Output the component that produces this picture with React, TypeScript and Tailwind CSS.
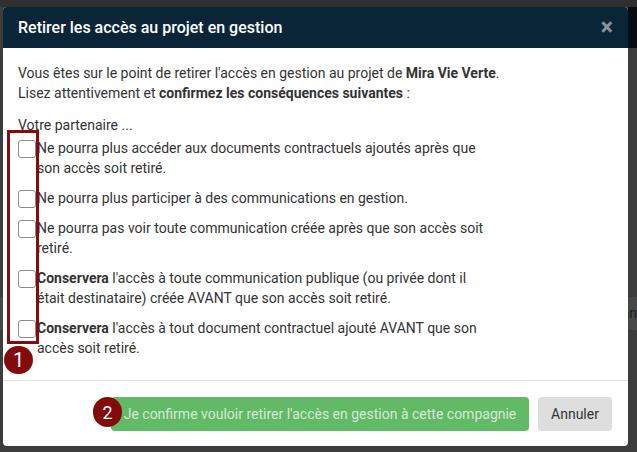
import React from "react";

const items: React.ReactNode[] = [
  <>Ne pourra plus accéder aux documents contractuels ajoutés après que son accès soit retiré.</>,
  <>Ne pourra plus participer à des communications en gestion.</>,
  <>Ne pourra pas voir toute communication créée après que son accès soit retiré.</>,
  <>
    <span className="font-bold">Conservera</span> l'accès à toute communication publique (ou privée dont il était destinataire) créée AVANT que son accès soit retiré.
  </>,
  <>
    <span className="font-bold">Conservera</span> l'accès à tout document contractuel ajouté AVANT que son accès soit retiré.
  </>,
];

export default function App() {
  return (
    <div className="relative w-[637px] h-[452px] overflow-hidden bg-[#3c3c3c] font-['Roboto','Liberation_Sans',sans-serif]">
      {/* backdrop page */}
      <div className="flex flex-col">
        <div className="h-[7px] bg-[#2f2f2f]" />
        <div className="h-[41px] flex justify-end">
          <div className="w-[9px] bg-[#060d12]" />
        </div>
        <div className="h-[249px]" />
        <div className="h-[33px] bg-[#474747] flex justify-end items-center text-[14px] text-[#1c1c1c]">
          <span>nn</span>
        </div>
      </div>

      {/* modal */}
      <div className="absolute left-[3px] top-[7px] w-[625px] bg-white rounded-[4px] overflow-hidden">
        <div className="h-[41px] bg-[#0b2538] flex items-center justify-between pl-[15px] pr-[15px]">
          <span className="text-white text-[16px] font-medium">Retirer les accès au projet en gestion</span>
          <span className="text-[#8796a1] text-[23px] font-bold leading-none">×</span>
        </div>

        <div className="px-[15px] pt-[15px] pb-[22px] text-[14px] leading-[20px] text-[#333]">
          <p>
            Vous êtes sur le point de retirer l'accès en gestion au projet de <span className="font-bold">Mira Vie Verte</span>.
          </p>
          <p>
            Lisez attentivement et <span className="font-bold">confirmez les conséquences suivantes</span> :
          </p>
          <p className="mt-[12px]">Votre partenaire ...</p>
          <div className="mt-[3px] flex flex-col gap-[10px]">
            {items.map((t, i) => (
              <div key={i} className="flex items-start">
                <div className="mt-[2px] w-[18px] h-[18px] shrink-0 rounded-[3px] border border-[#8c8c8c] bg-white" />
                <div className="ml-[1px] w-[460px]">{t}</div>
              </div>
            ))}
          </div>
        </div>

        <div className="border-t border-[#e5e5e5] pt-[16px] pb-[15px] pr-[16px] flex justify-end gap-[9px]">
          <div className="relative">
            <button className="h-[34px] w-[418px] rounded-[4px] bg-[#62b966] text-[#d6ead6] text-[14px] px-[12px]">
              Je confirme vouloir retirer l'accès en gestion à cette compagnie
            </button>
            <div className="absolute left-[-18px] top-[0px] w-[29px] h-[30px] rounded-full bg-[#820c0c] text-white text-[18px] flex items-center justify-center">
              2
            </div>
          </div>
          <button className="h-[34px] w-[74px] rounded-[4px] bg-[#dedede] text-[#333] text-[14px]">Annuler</button>
        </div>

        {/* annotation */}
        <div className="absolute left-[4px] top-[123px] w-[32px] h-[214px] border-[3px] border-[#880b0b]" />
        <div className="absolute left-[1px] top-[339px] w-[29px] h-[28px] rounded-full bg-[#820c0c] text-white text-[20px] flex items-center justify-center">
          1
        </div>
      </div>
    </div>
  );
}
